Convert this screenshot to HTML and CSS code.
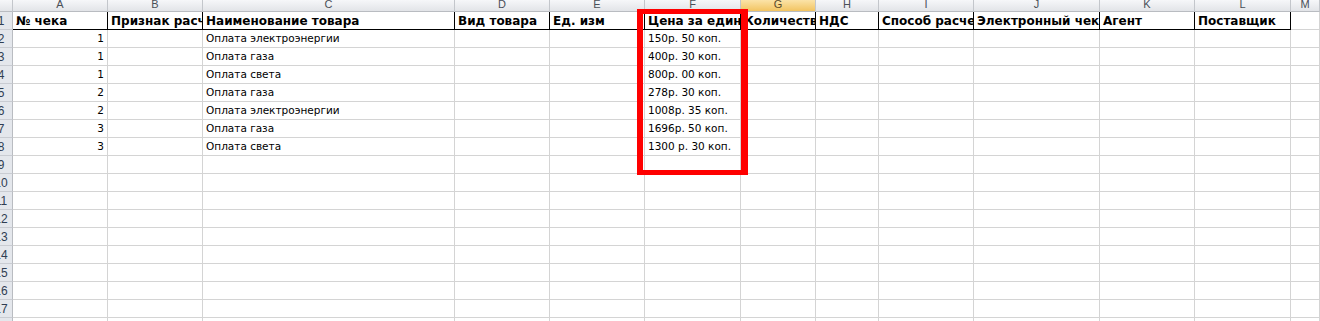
FILE: index.html
```html
<!doctype html>
<html lang="ru">
<head>
<meta charset="utf-8" />
<title>Лист1</title>
<link rel="stylesheet" href="styles.css">
</head>
<body>
  <div class="sheet" id="sheet">
    <!-- заголовки столбцов -->
    <div class="corner"></div>
    <div class="colhdr"><span>A</span></div>
    <div class="colhdr"><span>B</span></div>
    <div class="colhdr"><span>C</span></div>
    <div class="colhdr"><span>D</span></div>
    <div class="colhdr"><span>E</span></div>
    <div class="colhdr"><span>F</span></div>
    <div class="colhdr active"><span>G</span></div>
    <div class="colhdr"><span>H</span></div>
    <div class="colhdr"><span>I</span></div>
    <div class="colhdr"><span>J</span></div>
    <div class="colhdr"><span>K</span></div>
    <div class="colhdr"><span>L</span></div>
    <div class="colhdr"><span>M</span></div>

    <!-- строка 1: шапка -->
    <div class="rowhdr"><span>1</span></div>
    <div class="cell head">№ чека</div>
    <div class="cell head">Признак расчета</div>
    <div class="cell head">Наименование товара</div>
    <div class="cell head">Вид товара</div>
    <div class="cell head">Ед. изм</div>
    <div class="cell head">Цена за единицу</div>
    <div class="cell head">Количество</div>
    <div class="cell head">НДС</div>
    <div class="cell head">Способ расчета</div>
    <div class="cell head">Электронный чек</div>
    <div class="cell head">Агент</div>
    <div class="cell head">Поставщик</div>
    <div class="cell"></div>

    <!-- выделение столбца цены -->
    <div class="mark"></div>
  </div>

<script>
/* строки с данными + пустые строки до 18 */
const rows=[
  ['1','Оплата электроэнергии','150р. 50 коп.'],
  ['1','Оплата газа','400р. 30 коп.'],
  ['1','Оплата света','800р. 00 коп.'],
  ['2','Оплата газа','278р. 30 коп.'],
  ['2','Оплата электроэнергии','1008р. 35 коп.'],
  ['3','Оплата газа','1696р. 50 коп.'],
  ['3','Оплата света','1300 р. 30 коп.']
];
const sheet=document.getElementById('sheet'), mark=sheet.querySelector('.mark');
function add(cls,text){
  const d=document.createElement('div');
  d.className=cls;d.textContent=text||'';
  sheet.insertBefore(d,mark);return d;
}
for(let r=2;r<=18;r++){
  const data=rows[r-2]||['','',''];
  const h=add('rowhdr');const s=document.createElement('span');s.textContent=r;h.appendChild(s);
  add('cell num',data[0]);
  add('cell');
  add('cell',data[1]);
  add('cell');add('cell');
  add('cell',data[2]);
  for(let c=0;c<7;c++)add('cell');
}
</script>
</body>
</html>
```
FILE: styles.css
```css
:root{
  --grid:#d4d4d4;
  --hdr-line:#c3c6cb;
  --ink:#000;
}

*{margin:0;padding:0;box-sizing:border-box}
body{background:#fff;overflow:hidden;font-family:"DejaVu Sans",Verdana,sans-serif;}

/* === сетка листа === */
.sheet{
  position:relative;
  display:grid;
  grid-template-columns:13px 95px 95px 252px 95px 95px 96px 75px 63px 95px 126px 95px 96px 1fr;
  grid-template-rows:12px repeat(18,18px);
  width:1320px;
}

/* === заголовки столбцов === */
.corner,.colhdr{
  background:linear-gradient(#f6f7f9,#e2e4e8);
  border-right:1px solid var(--hdr-line);
  border-bottom:1px solid #b9bcc1;
  overflow:hidden;
}
.colhdr{display:flex;justify-content:center;align-items:flex-end;
        font-family:"Liberation Sans",Arial,sans-serif;
        font-size:11px;color:#4a4f57;line-height:11px;}
.colhdr span{margin-bottom:1px;}
.colhdr.active{background:linear-gradient(#fbe3a8,#f2c461);color:#5a4a2a;}

/* === номера строк === */
.rowhdr{
  background:#e4e7ec;
  border-right:1px solid #b9bcc1;
  border-bottom:1px solid #c9ccd2;
  overflow:hidden;display:flex;align-items:flex-end;
  font-family:"Liberation Sans",Arial,sans-serif;
  font-size:12px;color:#2f3d52;
}
.rowhdr span{display:block;flex:none;width:26px;margin-left:-12px;text-align:center;line-height:15px;}

/* === ячейки === */
.cell{
  border-right:1px solid var(--grid);
  border-bottom:1px solid var(--grid);
  padding:0 3px 2px;
  font-size:10.5px;color:var(--ink);
  white-space:nowrap;overflow:hidden;
  display:flex;align-items:flex-end;
  line-height:14px;
}
.cell.num{justify-content:flex-end;}
.cell.head{
  border-right-color:#000;border-bottom-color:#000;
  font-weight:bold;font-size:12px;padding-bottom:1px;
}

/* === красная рамка === */
.mark{
  position:absolute;left:637px;top:9px;
  width:111px;height:166px;
  border:5px solid #ff0000;border-left-width:6px;border-right-width:7px;
  pointer-events:none;
}
```
